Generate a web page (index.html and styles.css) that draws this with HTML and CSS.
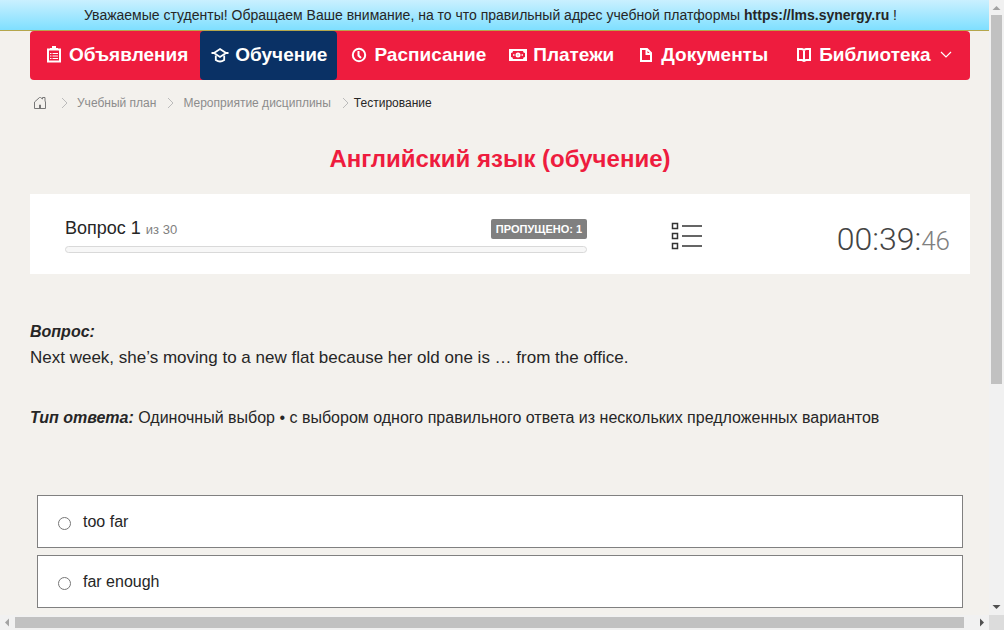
FILE: index.html
```
<!DOCTYPE html>
<html lang="ru">
<head>
<meta charset="utf-8">
<meta name="viewport" content="width=device-width, initial-scale=1">
<title>Тестирование</title>
<link rel="stylesheet" href="styles.css">
</head>
<body>
<div class="frame">
  <div class="page">
    <div class="notice"><p>Уважаемые студенты! Обращаем Ваше внимание, на то что правильный адрес учебной платформы <b>https://lms.synergy.ru</b> !</p></div>
    <div class="content">
      <nav class="menu">
        <a class="menu-item" href="#"><svg class="menu-icon" viewBox="0 0 20 20"><path d="M4 4.500h12v12H4z" stroke-width="2"/><path d="M6 4h8M8 2h4" stroke-width="2"/><path d="M6 8.500h1.500M6 11h1.500M6 13.500h1.500M8.500 8.500H14M8.500 11H14M8.500 13.500H14" stroke-width="1"/></svg>Объявления</a>
        <a class="menu-item active" href="#"><svg class="menu-icon" viewBox="0 0 20 20"><path d="M10 4l6 4-6 4-6-4z" stroke-width="1.800"/><path d="M5.800 10.500V15q4.200 3 8.400 0v-4.500M1.500 8H4M16 8h2.500" stroke-width="1.800"/></svg>Обучение</a>
        <a class="menu-item" href="#"><svg class="menu-icon" viewBox="0 0 20 20"><circle cx="10" cy="10" r="6.200"/><path d="M9.500 6v4.500l2.500 2.500"/></svg>Расписание</a>
        <a class="menu-item" href="#"><svg class="menu-icon" viewBox="0 0 20 20"><path d="M1 4h18v12H1z" fill="#fff" stroke="none"/><path d="M5 6h10q0 2 2 2v4q-2 0-2 2H5q0-2-2-2V8q2 0 2-2z" fill="#ee1c3e" stroke="none"/><circle cx="10" cy="10" r="2.500" fill="#fff" stroke="none"/><path d="M5 10h1.500M13.500 10H15" stroke-width="1.500"/><path d="M9.500 10h1" stroke="#ee1c3e" stroke-width="1"/></svg>Платежи</a>
        <a class="menu-item" href="#"><svg class="menu-icon" viewBox="0 0 20 20"><path d="M5 4h6l4 4v8H5zM10.500 4v5H15"/></svg>Документы</a>
        <a class="menu-item last" href="#"><svg class="menu-icon" viewBox="0 0 20 20"><path d="M4 4h4l2 1 2-1h4v11h-4l-2 1-2-1H4zM10 5v12"/></svg>Библиотека<svg class="menu-chevron" viewBox="0 0 12 12"><path d="M1 3l5 5 5-5"/></svg></a>
      </nav>
      <nav class="crumbs" aria-label="Навигация">
        <a class="home" href="#" aria-label="Главная"><svg viewBox="0 0 14 14"><path d="M1.500 6l5-4.500h1L9.500 3V1.500h2.500V5l.500 1v6.500h-11zM6.500 12.500V9h1v3.500"/></svg></a>
        <svg class="sep" viewBox="0 0 8 12"><path d="M1 1l5 5-5 5"/></svg>
        <a href="#">Учебный план</a>
        <svg class="sep" viewBox="0 0 8 12"><path d="M1 1l5 5-5 5"/></svg>
        <a href="#">Мероприятие дисциплины</a>
        <svg class="sep" viewBox="0 0 8 12"><path d="M1 1l5 5-5 5"/></svg>
        <span class="current">Тестирование</span>
      </nav>
      <h1 class="title">Английский язык (обучение)</h1>
      <section class="status">
        <div class="progress">
          <div class="progress-head">
            <span class="count">Вопрос 1 <small>из 30</small></span>
            <span class="skipped">ПРОПУЩЕНО: 1</span>
          </div>
          <div class="bar"></div>
        </div>
        <button class="list-button" type="button" aria-label="Список вопросов"><svg viewBox="0 0 32 30"><path d="M2.500 2.500h5v5h-5zM2.500 12.500h5v5h-5zM2.500 22.500h5v5h-5z"/><path d="M12 5h20M12 15h20M12 25h20"/></svg></button>
        <div class="timer">00:39:<span>46</span></div>
      </section>
      <section class="question">
        <p class="label">Вопрос:</p>
        <p class="text">Next week, she’s moving to a new flat because her old one is … from the office.</p>
        <p class="kind"><span class="label">Тип ответа:</span> Одиночный выбор • с выбором одного правильного ответа из нескольких предложенных вариантов</p>
      </section>
      <form class="answers">
        <label class="answer"><input type="radio" name="answer"><span>too far</span></label>
        <label class="answer"><input type="radio" name="answer"><span>far enough</span></label>
      </form>
    </div>
  </div>
  <div class="scroll vertical">
    <svg class="arrow" viewBox="0 0 15 15"><path d="M3.500 10h8l-4-4z" fill="#a3a3a3"/></svg>
    <div class="track"><div class="thumb"></div></div>
    <svg class="arrow" viewBox="0 0 15 15"><path d="M3.500 5h8l-4 4z" fill="#505050"/></svg>
  </div>
  <div class="scroll horizontal">
    <svg class="arrow" viewBox="0 0 15 15"><path d="M9 3.500v8l-4-4z" fill="#a3a3a3"/></svg>
    <div class="track"><div class="thumb"></div></div>
    <svg class="arrow" viewBox="0 0 15 15"><path d="M6 3.500v8l4-4z" fill="#505050"/></svg>
  </div>
  <div class="corner"></div>
</div>
</body>
</html>
```
FILE: styles.css
```
* { box-sizing: border-box; }
body {
  margin: 0;
  font-family: "Liberation Sans", Arial, sans-serif;
  font-size: 16px;
  color: #262626;
}
a { color: inherit; text-decoration: none; }
p, h1 { margin: 0; }
svg { fill: none; flex: none; display: block; }

.frame {
  display: grid;
  grid-template-columns: minmax(0, 1fr) 15px;
  grid-template-rows: minmax(0, 1fr) 15px;
  height: 100vh;
}
.page { overflow: hidden; background: #f3f1ed; }
.notice {
  padding: 5px 8px 5px 0;
  border-bottom: 1px solid #b5a64c;
  background: linear-gradient(#caf0ff, #7fdfff);
  font-size: 14px;
  line-height: 20px;
  text-align: center;
}
.content { padding: 0 19px 0 30px; }

.menu {
  display: flex;
  gap: 2px;
  padding: 0 4px;
  border-radius: 4px;
  background: #ee1c3e;
  color: #fff;
  font-size: 19px;
  font-weight: bold;
  line-height: 47px;
  white-space: nowrap;
}
.menu-item { display: flex; align-items: center; gap: 5px; padding: 0 10px 2px; border-radius: 4px; }
.menu-item.active { background: #0a3165; }
.menu-item.last { margin-left: 4px; }
.menu-icon { width: 20px; height: 20px; stroke: #fff; stroke-width: 2; }
.menu-chevron { width: 12px; height: 12px; margin-left: 4px; stroke: #fff; stroke-width: 1.200; }

.crumbs {
  display: flex;
  align-items: center;
  gap: 8px;
  padding: 15px 3px;
  font-size: 12px;
  line-height: 16px;
  color: #8c8c8c;
}
.home { margin-right: 3px; }
.home svg { width: 14px; height: 14px; stroke: #777; }
.sep { width: 8px; height: 12px; margin-left: 3px; stroke: #bbb; }
.current { margin-left: -4px; color: #262626; }

.title {
  margin-top: 17px;
  color: #ee1c3e;
  font-size: 24px;
  line-height: 32px;
  text-align: center;
}

.status {
  display: grid;
  grid-template-columns: 59fr 13fr 28fr;
  align-items: center;
  height: 80px;
  margin-top: 19px;
  padding: 0 20px 0 35px;
  background: #fff;
}
.progress { padding-top: 1px; }
.progress-head { display: flex; justify-content: space-between; align-items: center; }
.count { font-size: 18px; line-height: 24px; }
.count small { font-size: 13px; color: #808080; }
.skipped {
  padding: 0 5px;
  border-radius: 2px;
  background: #808080;
  color: #fff;
  font-size: 11px;
  font-weight: bold;
  line-height: 20px;
}
.bar { height: 7px; margin-top: 4px; border: 1px solid #d9d9d9; border-radius: 4px; background: #f7f7f7; }
.list-button { justify-self: end; padding: 4px 0 0; border: 0; background: none; }
.list-button svg { width: 32px; height: 30px; stroke: #333; stroke-width: 1.500; }
.timer {
  justify-self: end;
  padding-top: 12px;
  font-family: Roboto, "Open Sans", sans-serif;
  font-size: 32px;
  font-weight: 300;
  line-height: 40px;
  color: #444;
}
.timer span { font-size: 26px; color: #808080; }

.question { margin-top: 45px; line-height: 26px; }
.label { font-weight: bold; font-style: italic; }
.text { font-size: 17px; }
.kind { margin-top: 34px; }

.answers { display: grid; gap: 7px; margin-top: 64px; padding: 0 7px; }
.answer {
  display: flex;
  align-items: center;
  gap: 12px;
  height: 53px;
  padding: 0 20px;
  border: 1px solid #808080;
  background: #fff;
}
.answer input { width: 13px; height: 13px; margin: 4px 0 0; }

.scroll { display: flex; background: #f1f1f1; }
.vertical { flex-direction: column; grid-column: 2; grid-row: 1; }
.horizontal { grid-column: 1; grid-row: 2; }
.arrow { width: 15px; height: 15px; }
.track { flex: 1; }
.thumb { background: #c1c1c1; }
.vertical .thumb { width: 11px; height: 63%; margin: 0 2px; }
.horizontal .track { padding: 2px 0; }
.horizontal .thumb { width: 99%; height: 11px; }
.corner { background: #dcdcdc; }
```
